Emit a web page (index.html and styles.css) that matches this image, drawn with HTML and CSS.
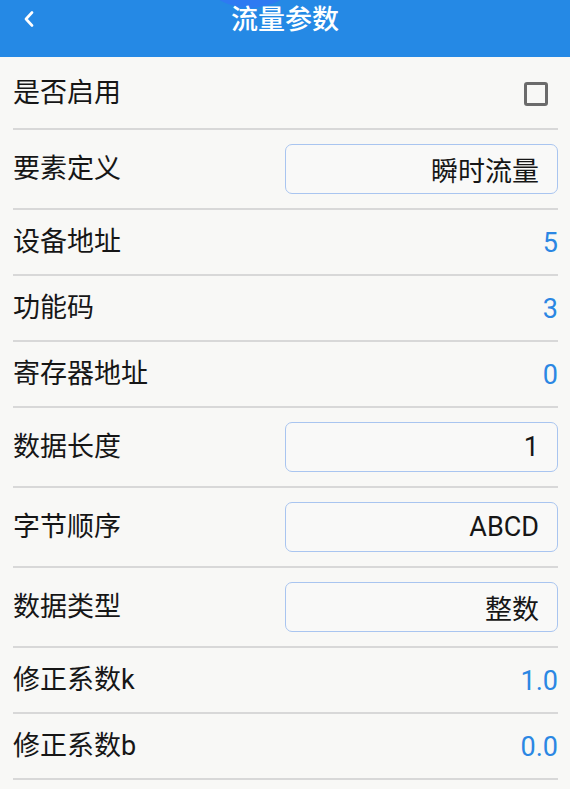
FILE: index.html
```html
<!DOCTYPE html>
<html lang="zh-CN">
<head>
<meta charset="utf-8">
<title>流量参数</title>
<link rel="stylesheet" href="styles.css">
</head>
<body>
<header class="topbar">
  <span class="ripple"></span>
  <button class="back" aria-label="返回">
    <svg width="12" height="16" viewBox="0 0 12 16"><polyline points="9,1.5 3,8 9,14.5" fill="none" stroke="#fff" stroke-width="2.6" stroke-linecap="round" stroke-linejoin="round"/></svg>
  </button>
  <h1 class="title">流量参数</h1>
</header>
<main class="list">
  <div class="row row-check">
    <span class="label">是否启用</span>
    <span class="checkbox"></span>
  </div>
  <div class="row row-input">
    <span class="label">要素定义</span>
    <span class="field">瞬时流量</span>
  </div>
  <div class="row">
    <span class="label">设备地址</span>
    <span class="value">5</span>
  </div>
  <div class="row">
    <span class="label">功能码</span>
    <span class="value">3</span>
  </div>
  <div class="row">
    <span class="label">寄存器地址</span>
    <span class="value">0</span>
  </div>
  <div class="row row-input">
    <span class="label">数据长度</span>
    <span class="field">1</span>
  </div>
  <div class="row row-input">
    <span class="label">字节顺序</span>
    <span class="field">ABCD</span>
  </div>
  <div class="row row-input">
    <span class="label">数据类型</span>
    <span class="field">整数</span>
  </div>
  <div class="row">
    <span class="label">修正系数k</span>
    <span class="value">1.0</span>
  </div>
  <div class="row">
    <span class="label">修正系数b</span>
    <span class="value">0.0</span>
  </div>
</main>
</body>
</html>
```
FILE: styles.css
```css
html, body {
  margin: 0;
  padding: 0;
}
body {
  width: 570px;
  height: 789px;
  overflow: hidden;
  background: #f8f8f6;
  font-family: Roboto, "Noto Sans CJK SC", sans-serif;
  color: #161616;
}
.topbar {
  position: relative;
  height: 57px;
  background: #2589e5;
  display: flex;
  justify-content: center;
  overflow: hidden;
}
.ripple {
  position: absolute;
  left: 188px;
  top: -116px;
  width: 124px;
  height: 124px;
  border-radius: 50%;
  background: #2e7af2;
}
.back {
  position: absolute;
  left: 23px;
  top: 11px;
  padding: 0;
  border: 0;
  background: none;
  width: 12px;
  height: 16px;
  display: block;
}
.back svg { display: block; }
.title {
  position: relative;
  margin: 0;
  margin-top: 2px;
  font-size: 27px;
  line-height: 36px;
  font-weight: 500;
  color: #ffffff;
}
.list {
  padding: 0 12px 0 13px;
}
.row {
  height: 64px;
  display: flex;
  align-items: center;
  justify-content: space-between;
  border-bottom: 2px solid #d8d8d8;
}
.row-check {
  height: 71px;
}
.row-input {
  height: 78px;
}
.label {
  font-size: 27px;
  line-height: 32px;
  color: #161616;
}
.value {
  font-size: 27px;
  line-height: 32px;
  color: #2b87e3;
  margin-top: 2px;
}
.checkbox {
  width: 18px;
  height: 18px;
  border: 3px solid #6b6b6b;
  border-radius: 3px;
  margin-right: 10px;
  margin-top: 2px;
}
.field {
  box-sizing: border-box;
  width: 273px;
  height: 50px;
  border: 1.5px solid #a9c5f0;
  border-radius: 7px;
  padding-right: 18px;
  display: flex;
  align-items: center;
  justify-content: flex-end;
  font-size: 27px;
  color: #161616;
  background: #f9f9f8;
}
```
